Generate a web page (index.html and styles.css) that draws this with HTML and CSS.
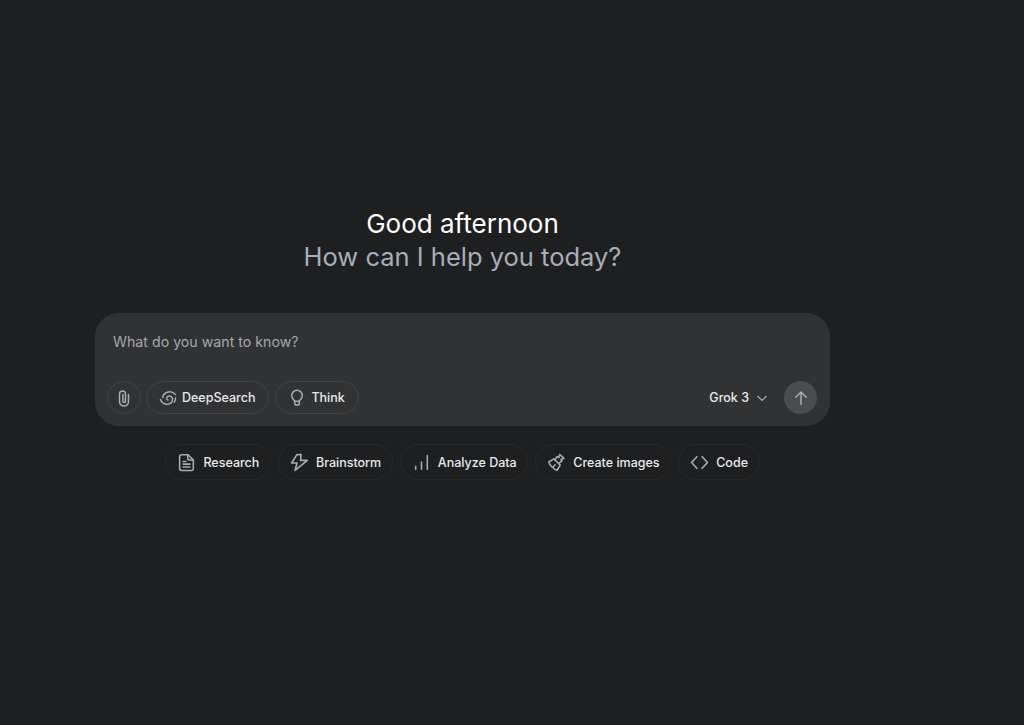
FILE: index.html
```html
<!DOCTYPE html>
<html lang="en">
<head>
  <meta charset="UTF-8" />
  <title>Grok</title>
  <link rel="stylesheet" href="styles.css">
</head>
<body>
  <main class="container">
    <h1 class="greeting">Good afternoon<span class="sub">How can I help you today?</span></h1>

    <div class="composer">
      <div class="placeholder">What do you want to know?</div>
      <div class="toolbar">
        <button class="pill round">
          <svg class="icon" viewBox="0 0 18 18"><path d="M13.500 5.500v7a4.500 4.500 0 0 1-9 0V5a3 3 0 0 1 6 0v7.200a1.300 1.300 0 0 1-2.600 0V5.500"/></svg>
        </button>
        <button class="pill">
          <svg class="icon" viewBox="0 0 18 18"><path d="M16.500 5.500C14 3 10.500 2.300 7.500 3.500 5.500 4.300 4 6 3.800 8.500"/><path d="M1.500 10.500C2.500 14 6 16 9.500 15 13 14 14.500 11 13 8.500 11.800 6.500 8.800 6.500 7.800 8.300 7.200 9.500 7.800 10.800 9 11"/><path d="M16.500 9C16.700 10.500 16.200 12 15.200 13.300"/></svg>
          DeepSearch
        </button>
        <button class="pill">
          <svg class="icon" viewBox="0 0 18 18"><path d="M6.500 12.300c0-1.500-2.800-2.600-2.800-5.700a5.300 5.300 0 0 1 10.600 0c0 3.100-2.800 4.200-2.800 5.700z"/><path d="M6.700 12.300v2c0 1 .8 1.800 1.800 1.800h1c1 0 1.800-.8 1.800-1.800v-2"/></svg>
          Think
        </button>
        <div class="spacer"></div>
        <div class="model">
          Grok 3
          <svg class="chevron" viewBox="0 0 12 12"><path d="M1.500 4l4.500 4.500L10.500 4"/></svg>
        </div>
        <button class="send">
          <svg class="icon" viewBox="0 0 18 18"><path d="M9 15.500V3M3.800 8.200L9 3l5.200 5.200"/></svg>
        </button>
      </div>
    </div>

    <div class="actions">
      <button class="pill action">
        <svg class="icon large" viewBox="0 0 18 18"><path d="M2.500 3.500A1.800 1.800 0 0 1 4.300 1.700h6.200l5 5v8a1.800 1.800 0 0 1-1.800 1.800H4.300a1.800 1.800 0 0 1-1.800-1.800z"/><path d="M10.200 1.900v3a1.700 1.700 0 0 0 1.700 1.700h3.400M5.800 8h2.700M5.800 10.500h6.400M5.800 13.200h6.400"/></svg>
        Research
      </button>
      <button class="pill action">
        <svg class="icon large" viewBox="0 0 18 18"><path d="M10.500 1.500H6.500L1.500 9.500h5.200l-2 7 11.800-9.500h-6.500z"/></svg>
        Brainstorm
      </button>
      <button class="pill action">
        <svg class="icon large" viewBox="0 0 18 18"><path d="M3.500 15.500v-2.800M9 15.500V8.500M14.500 15.500V2.500"/></svg>
        Analyze Data
      </button>
      <button class="pill action">
        <svg class="icon large" viewBox="0 0 18 18"><path d="M6.500 5.500l6 6-3 4.800c-3-.7-7-4.700-7.800-7.800z"/><path d="M7.500 6.300l2.300-3 1.300 1.200 1-3 4 3.500-3 1.200 1.200 1.300-3 2.300"/><path d="M5.500 13.500l2.200-2.300"/></svg>
        Create images
      </button>
      <button class="pill action">
        <svg class="icon large" viewBox="0 0 18 18"><path d="M6.500 3.500L1.500 9l5 5.500M11.500 3.500l5 5.500-5 5.500"/></svg>
        Code
      </button>
    </div>
  </main>
</body>
</html>
```

FILE: styles.css
```css
html, body {
  height: 100%;
}

body {
  margin: 0;
  background-color: #1e1f21;
  color: #ffffff;
  font-family: Inter, 'Liberation Sans', sans-serif;
}

.container {
  width: 735px;
  margin-left: 95px;
  padding-top: 206px;
}

.greeting {
  margin: 0;
  font-size: 26px;
  line-height: 35px;
  font-weight: 400;
  text-align: center;
}

.sub {
  display: block;
  font-size: 25.500px;
  color: #a8adb8;
  margin-top: -2px;
}

.composer {
  margin-top: 39px;
  height: 113px;
  box-sizing: border-box;
  padding: 13px 13px 12px 12px;
  background: #313234;
  border-radius: 24px;
  display: flex;
  flex-direction: column;
  justify-content: space-between;
}

.placeholder {
  padding: 7px 6px 0;
  font-size: 14.200px;
  line-height: 18px;
  color: #a3a7b0;
}

.toolbar {
  display: flex;
  align-items: center;
  gap: 6px;
}

.pill {
  display: flex;
  align-items: center;
  gap: 5px;
  height: 33px;
  padding: 0 13px 0 12px;
  background: none;
  border: 1px solid #424347;
  border-radius: 17px;
  color: #e8e9ec;
  font-family: inherit;
  font-size: 12.500px;
  font-weight: 500;
}

.round {
  width: 34px;
  padding: 0;
  justify-content: center;
  margin-right: -1px;
}

.icon {
  width: 18px;
  height: 18px;
  flex: none;
  fill: none;
  stroke: #a9abaf;
  stroke-width: 1.500;
  stroke-linecap: round;
  stroke-linejoin: round;
}

.spacer {
  flex: 1;
}

.model {
  display: flex;
  align-items: center;
  gap: 7px;
  margin-right: 10px;
  font-size: 12.500px;
  font-weight: 500;
  color: #e8e9ec;
}

.chevron {
  width: 12px;
  height: 12px;
  fill: none;
  stroke: #a9abaf;
  stroke-width: 1.200;
}

.send {
  display: flex;
  align-items: center;
  justify-content: center;
  width: 33px;
  height: 33px;
  padding: 0;
  border: none;
  border-radius: 50%;
  background: #4b4c4f;
}

.actions {
  display: flex;
  justify-content: center;
  gap: 7px;
  margin-top: 18px;
}

.action {
  height: 36px;
  gap: 7px;
  padding: 0 10.600px 0 11px;
  border-color: #28292b;
  border-radius: 18px;
}

.large {
  width: 19px;
  height: 19px;
}
```
